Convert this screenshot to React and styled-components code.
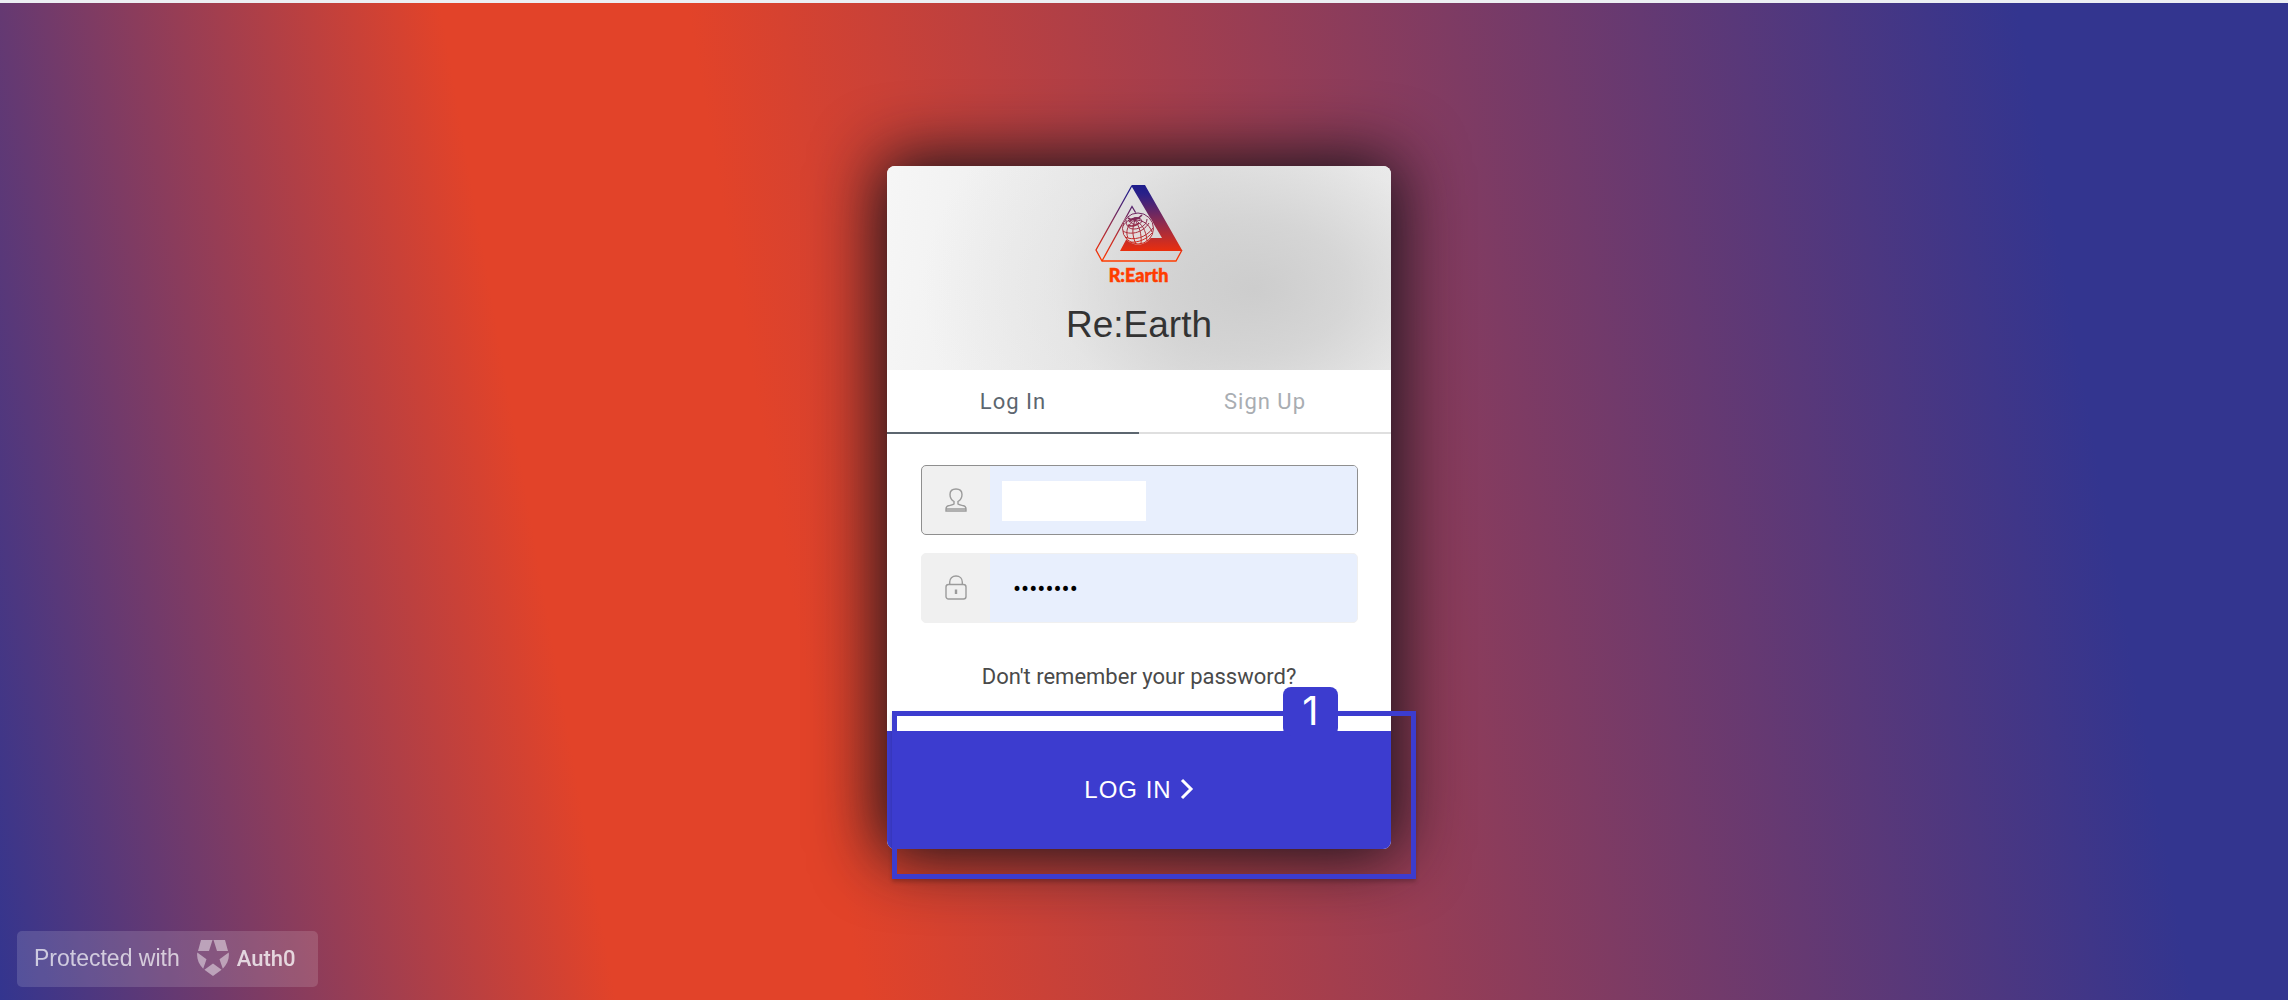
import React, { useState } from "react";
import styled, { createGlobalStyle } from "styled-components";

const INDIGO = "#3c3ccf";

const GlobalStyle = createGlobalStyle`
  *, *::before, *::after { box-sizing: border-box; }
  body { margin: 0; font-family: Roboto, "Liberation Sans", sans-serif; }
  button, input { font: inherit; }
`;

const Page = styled.main`
  min-height: 100vh;
  display: flex;
  align-items: center;
  justify-content: center;
  padding: 12px 10px 0 0;
  border-top: 3px solid #eceff3;
  background: linear-gradient(80deg, #33358f 0%, #e24329 25%, #e24329 35%, #33358f 89%);
`;

const Card = styled.section`
  width: 504px;
  max-width: 100%;
  border-radius: 8px;
  background: #fff;
  box-shadow: 0 0 67px 7px #111118;
`;

const Header = styled.header`
  height: 204px;
  padding-top: 18px;
  display: flex;
  flex-direction: column;
  align-items: center;
  border-radius: 8px 8px 0 0;
  background:
    radial-gradient(ellipse 66% 115% at 73% 60%, rgba(200, 200, 200, 0.85) 0%, rgba(204, 204, 204, 0.7) 28%, rgba(220, 220, 220, 0.4) 60%, rgba(240, 240, 240, 0) 100%),
    linear-gradient(95deg, #f6f6f6 0%, #eeeeee 30%, #e4e4e4 60%, #f2f2f2 100%);
`;

const Title = styled.h1`
  margin: 13px 0 0;
  font: 400 37px/44px "Liberation Sans", sans-serif;
  color: #333;
`;

const Tabs = styled.nav`
  display: flex;
`;

const Tab = styled.button`
  flex: 1;
  height: 64px;
  padding: 0;
  border: 0;
  border-bottom: 2px solid ${(p) => (p.$active ? "#5c666f" : "#dfdfdf")};
  background: #fff;
  color: ${(p) => (p.$active ? "#5c666f" : "#a9adb2")};
  font-size: 22px;
  letter-spacing: 1px;
  cursor: pointer;
`;

const Fields = styled.div`
  display: grid;
  gap: 18px;
  padding: 31px 33px 0 34px;
`;

const Field = styled.label`
  position: relative;
  display: flex;
  height: 70px;
  overflow: hidden;
  border: 1px solid ${(p) => (p.$active ? "#8f8f8f" : "#f0f0f0")};
  border-radius: 5px;
  background: #f0f0f0;
`;

const FieldIcon = styled.span`
  width: 68px;
  display: flex;
  align-items: center;
  justify-content: center;
  color: #9b9b9b;
`;

const Input = styled.input`
  flex: 1;
  min-width: 0;
  padding: 2px 23px 0;
  border: 0;
  outline: 0;
  background: #e8effd;
  color: #000;
  font-size: 24px;
`;

const Redaction = styled.span`
  position: absolute;
  top: 15px;
  left: 80px;
  width: 144px;
  height: 40px;
  background: #fff;
`;

const Help = styled.p`
  height: 108px;
  margin: 0;
  display: flex;
  align-items: center;
  justify-content: center;
`;

const HelpLink = styled.a`
  color: #4a4a4a;
  font-size: 22px;
  line-height: 28px;
  text-decoration: none;
`;

const SubmitArea = styled.div`
  position: relative;
`;

const Submit = styled.button`
  width: 100%;
  height: 118px;
  padding: 0;
  display: flex;
  align-items: center;
  justify-content: center;
  gap: 8px;
  border: 0;
  border-radius: 0 0 8px 8px;
  background: ${INDIGO};
  color: #fff;
  font: 400 24px/28px "Liberation Sans", sans-serif;
  letter-spacing: 1px;
  cursor: pointer;
`;

const Callout = styled.div`
  position: absolute;
  inset: -20px -25px -30px 5px;
  border: 5px solid ${INDIGO};
  box-shadow: 0 3px 4px rgba(0, 0, 0, 0.2);
  pointer-events: none;
`;

const Step = styled.span`
  position: absolute;
  top: -29px;
  right: 73px;
  width: 55px;
  height: 49px;
  border-radius: 8px;
  background: ${INDIGO};
  color: #fff;
  font: 400 40px/48px Inter, "Open Sans", sans-serif;
  text-align: center;
`;

const AuthBadge = styled.a`
  position: fixed;
  left: 17px;
  bottom: 13px;
  height: 56px;
  padding: 0 22px 2px 17px;
  display: flex;
  align-items: center;
  border-radius: 5px;
  background: rgba(255, 255, 255, 0.14);
  color: rgba(255, 255, 255, 0.7);
  font: 400 23px/28px "Liberation Sans", sans-serif;
  text-decoration: none;
`;

const Shield = styled.svg`
  margin: 0 8px 0 17px;
  opacity: 0.65;
`;

const AuthName = styled.span`
  padding-top: 2px;
  color: rgba(255, 255, 255, 0.76);
  font: 500 22px/28px Roboto, sans-serif;
`;

const Logo = () => (
  <svg width="88" height="106" viewBox="0 0 88 106" fill="none" role="img" aria-label="R:Earth">
    <defs>
      <linearGradient id="mark" gradientUnits="userSpaceOnUse" x1="0" y1="1" x2="0" y2="77">
        <stop offset="0" stopColor="#1d1d8c" />
        <stop offset="0.12" stopColor="#2a2088" />
        <stop offset="0.5" stopColor="#8e2b4e" />
        <stop offset="0.85" stopColor="#e62e10" />
        <stop offset="1" stopColor="#ff3c00" />
      </linearGradient>
    </defs>
    <path fill="url(#mark)" d="M37 1h13l37 65v1H25l7-13h35L37 3Z" />
    <g stroke="url(#mark)" strokeWidth="1.300">
      <path d="M37 1.500 1 66l6 11H81L87 66" />
      <path d="M7 77 37 22.500 45 36" />
    </g>
    <circle cx="43" cy="44.500" r="16" fill="#e2dcdc" />
    <g stroke="url(#mark)" strokeWidth="1">
      <circle cx="43" cy="44.500" r="15.500" />
      <path d="M40 36c-7 4-10 11-7 18M40 36c-3 8-3 16 1 24M40 36c4 6 7 14 6 24M40 36c7 4 11 10 12 21M40 36c8 0 14 4 17 12" />
      <path d="M28 42c3-5 10-9 15-8s5 5 0 6-8-1-7-3 4-4 7-3M28 47c6 4 19 3 26-8M30 53c8 4 21 1 28-9M35 58c8 1 17-3 22-9M31 36c0 5 2 9 8 9s13-4 13-10" />
      <path d="M33 34c4 3 8 3 14-3M34 38c3-4 8-5 11-3M33 41c3 2 8 1 11-2" strokeWidth="1.600" />
    </g>
    <text x="43.500" y="98" textAnchor="middle" fill="#ff3c00" stroke="#ff3c00" strokeWidth="0.500" fontFamily="Lato, sans-serif" fontWeight="900" fontSize="18">
      R:Earth
    </text>
  </svg>
);

const UserIcon = () => (
  <svg width="22" height="24" viewBox="0 0 22 24" fill="none" stroke="currentColor" strokeWidth="1.400" aria-hidden="true">
    <path d="M9 16v-2.500C6.500 12 5 9.500 5 6.500 5 3.500 7 1 11 1s6 2.500 6 5.500c0 3-1.500 5.500-4 7V16c1 1 3.500 1.200 5.500 1.700 1.800.5 2.500 1.300 2.500 3.300v2H1v-2c0-2 .7-2.800 2.500-3.300 2-.5 4.500-.7 5.500-1.700ZM1 21h20" />
  </svg>
);

const LockIcon = () => (
  <svg width="22" height="26" viewBox="0 0 22 26" fill="none" stroke="currentColor" strokeWidth="1.400" aria-hidden="true">
    <rect x="1" y="9.500" width="20" height="14.500" rx="2.500" />
    <path d="M4.700 9.500V7C4.700 3.500 7.200 1 11 1s6.300 2.500 6.300 6v2.500" />
    <path d="M11 14.500V19" strokeWidth="2.400" />
  </svg>
);

const Chevron = () => (
  <svg width="14" height="24" viewBox="0 0 14 24" fill="none" stroke="currentColor" strokeWidth="3" aria-hidden="true">
    <path d="m2 2 9 9-9 9" />
  </svg>
);

export default function App() {
  const [tab, setTab] = useState("login");
  const [email, setEmail] = useState("");
  const [password, setPassword] = useState("reearth1");

  return (
    <>
      <GlobalStyle />
      <Page>
        <Card>
          <Header>
            <Logo />
            <Title>Re:Earth</Title>
          </Header>
          <Tabs>
            <Tab type="button" $active={tab === "login"} onClick={() => setTab("login")}>Log In</Tab>
            <Tab type="button" $active={tab === "signup"} onClick={() => setTab("signup")}>Sign Up</Tab>
          </Tabs>
          <form onSubmit={(e) => e.preventDefault()}>
            <Fields>
              <Field $active htmlFor="email">
                <FieldIcon><UserIcon /></FieldIcon>
                <Input id="email" type="email" aria-label="Email" value={email} onChange={(e) => setEmail(e.target.value)} />
                <Redaction />
              </Field>
              <Field htmlFor="password">
                <FieldIcon><LockIcon /></FieldIcon>
                <Input id="password" type="password" aria-label="Password" value={password} onChange={(e) => setPassword(e.target.value)} />
              </Field>
            </Fields>
            <Help>
              <HelpLink href="#reset">Don't remember your password?</HelpLink>
            </Help>
            <SubmitArea>
              <Submit type="submit">
                LOG IN
                <Chevron />
              </Submit>
              <Callout>
                <Step>1</Step>
              </Callout>
            </SubmitArea>
          </form>
        </Card>
        <AuthBadge href="#auth0">
          Protected with
          <Shield width="32" height="36" viewBox="0 0 32 36" fill="currentColor" aria-hidden="true">
            <path d="M4 0h11.500L12 11H1ZM16.500 0H28l3 11H20ZM.3 12.500l9.200 6.700-3.300 9.600C1.500 24-.6 18 .3 12.500ZM31.700 12.500l-9.200 6.700 3.300 9.600c4.700-4.800 6.800-10.800 5.900-16.300ZM16 23.500l8.600 6.300L16 36l-8.600-6.200Z" />
          </Shield>
          <AuthName>Auth0</AuthName>
        </AuthBadge>
      </Page>
    </>
  );
}
